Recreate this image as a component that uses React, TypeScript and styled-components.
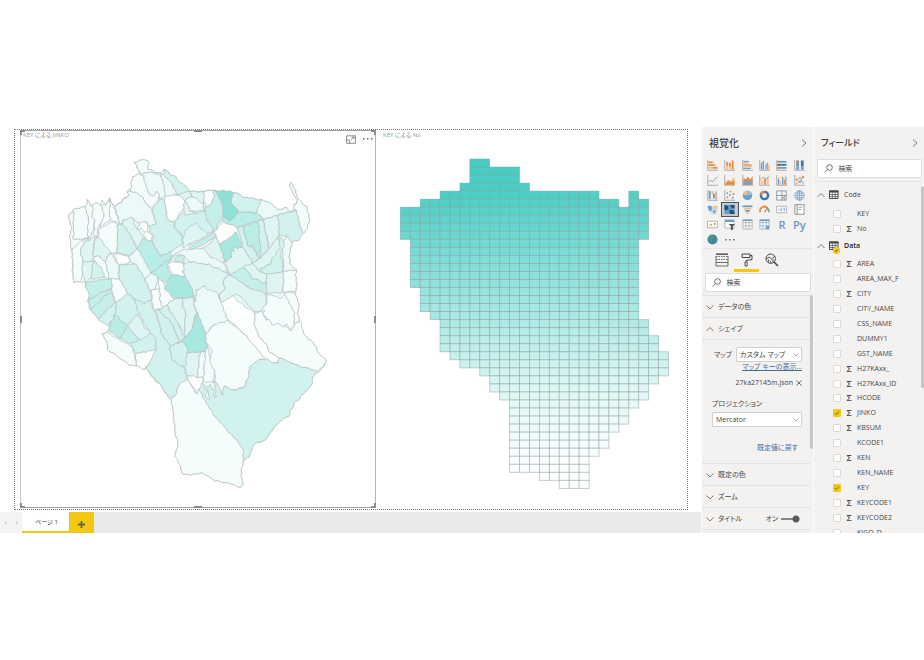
import React from "react";
import styled, { createGlobalStyle, css } from "styled-components";

const GlobalStyle = createGlobalStyle`
  *, *::before, *::after { box-sizing: border-box; }
  body {
    margin: 0;
    background: #fff;
    color: #484644;
    font-family: "Open Sans", "Noto Sans CJK JP", sans-serif;
    font-size: 7px;
    line-height: 10px;
    font-feature-settings: "palt";
  }
  button, input, select { font: inherit; font-feature-settings: inherit; color: inherit; }
  button { border: 0; padding: 0; background: none; cursor: pointer; }
  h2, h3, ul { margin: 0; padding: 0; font-weight: inherit; font-size: inherit; }
  svg { display: block; }
`;

const Page = styled.div`
  height: 100vh;
  padding: 127px 0;
  overflow: hidden;
`;

const Workspace = styled.div`
  display: grid;
  grid-template-columns: 1fr 112px 111px;
  height: 100%;
`;

const Report = styled.main`
  display: flex;
  flex-direction: column;
  min-width: 0;
`;

const Canvas = styled.div`
  flex: 1;
  min-height: 0;
  display: grid;
  grid-template-columns: 356fr 311fr;
  margin: 2px 13px 2px 14px;
  padding: 0 0 1px 5px;
  border: 1px dotted #777;
`;

const Visual = styled.section<{ $selected?: boolean }>`
  position: relative;
  display: flex;
  flex-direction: column;
  min-width: 0;
  min-height: 0;
  ${(p) =>
    p.$selected &&
    css`
      box-shadow: inset 1px 0 #c4c4c4, inset -1px 0 #b4b4b4, inset 0 1px #a4a4a4, inset 0 -1px #a4a4a4;
    `}
`;

const VisualHeader = styled.header<{ $inset: number }>`
  flex: none;
  display: flex;
  justify-content: space-between;
  height: 20px;
  padding: 0 3px 0 ${(p) => p.$inset}px;
  font-size: 6px;
  color: #8f9a98;
`;

const VisualActions = styled.div`
  display: flex;
  align-items: center;
  gap: 7px;
  height: 18px;
`;

const VisualBody = styled.svg`
  flex: 1;
  min-height: 0;
  width: 100%;
`;

const Handle = styled.span<{ $v: "top" | "middle" | "bottom"; $h: "left" | "center" | "right" }>`
  position: absolute;
  width: ${(p) => (p.$h === "center" ? 8 : p.$v === "middle" ? 2 : 5)}px;
  height: ${(p) => (p.$h === "center" ? 2 : p.$v === "middle" ? 7 : 5)}px;
  ${(p) => p.$v === "top" && "top: 0;"}
  ${(p) => p.$v === "bottom" && "bottom: 0;"}
  ${(p) => p.$v === "middle" && "top: calc(50% - 3px);"}
  ${(p) => p.$h === "left" && "left: 0;"}
  ${(p) => p.$h === "right" && "right: 0;"}
  ${(p) => p.$h === "center" && "left: calc(50% - 4px);"}
  ${(p) =>
    p.$h === "center" || p.$v === "middle"
      ? "background: #8c8c8c;"
      : `border: 0 solid #8c8c8c; border-${p.$v}-width: 2px; border-${p.$h}-width: 2px;`}
`;

const TabBar = styled.nav`
  display: flex;
  height: 21px;
  background: #eaeaea;
`;

const PagerButton = styled.button`
  width: 11px;
  color: #999;
  background: #f4f4f4;
`;

const PageTab = styled.button`
  width: 47px;
  padding-left: 2px;
  background: #fff;
  border-bottom: 2px solid #f2c811;
  font-size: 6px;
  color: #3a3a3a;
`;

const AddPage = styled.button`
  display: grid;
  place-items: center;
  width: 25px;
  padding-top: 3px;
  background: #f2c811;
`;

const Pane = styled.aside`
  display: flex;
  flex-direction: column;
  min-width: 0;
  min-height: 0;
  overflow: hidden;
  background: #f3f2f1;
  border-left: 1px solid #fbfbfb;
`;

const PaneHeader = styled.header`
  flex: none;
  display: flex;
  align-items: center;
  justify-content: space-between;
  height: 31px;
  padding: 0 5px 0 7px;
`;

const PaneTitle = styled.h2<{ $large?: boolean }>`
  font-size: ${(p) => (p.$large ? 10 : 9)}px;
  font-weight: 500;
  color: #3b3a39;
`;

const Gallery = styled.div`
  flex: none;
  display: grid;
  grid-template-columns: repeat(6, 1fr);
  height: 91px;
  grid-auto-rows: 1fr;
  padding: 0 5px 1px 2px;
  border-bottom: 1px solid #e6e5e4;
`;

const GalleryButton = styled.button<{ $active?: boolean }>`
  display: grid;
  place-items: center;
  ${(p) => p.$active && "outline: 1px solid #4a5560; outline-offset: -1px; background: #c3cbd3;"}
`;

const FormatTabs = styled.div`
  flex: none;
  display: flex;
  padding-left: 7px;
  height: 23px;
`;

const FormatTab = styled.button<{ $active?: boolean }>`
  display: grid;
  place-items: center;
  width: 25px;
  padding-top: 2px;
  border-bottom: 3px solid ${(p) => (p.$active ? "#f2c811" : "transparent")};
`;

const SearchBox = styled.label`
  flex: none;
  display: flex;
  align-items: center;
  gap: 5px;
  height: 19px;
  margin: 1px 2px 3px 3px;
  padding-left: 6px;
  background: #fff;
  border: 1px solid #dedddc;
  border-radius: 1px;
`;

const SearchInput = styled.input`
  min-width: 0;
  width: 100%;
  border: 0;
  padding: 0;
  outline: 0;
  background: none;
  &::placeholder { color: #484644; opacity: 1; }
`;

const Scroller = styled.div`
  flex: 1;
  min-height: 0;
  display: grid;
  grid-template-columns: 1fr 3px;
  overflow: hidden;
`;

const ScrollThumb = styled.div<{ $length: number; $gap?: number }>`
  height: ${(p) => p.$length}px;
  margin-top: ${(p) => p.$gap ?? 0}px;
  border-radius: 2px;
  background: #c8c6c4;
`;

const Sections = styled.div`
  min-width: 0;
`;

const Section = styled.div`
  display: flex;
  align-items: center;
  justify-content: space-between;
  height: 22px;
  padding: 0 10px 0 4px;
  border-top: 1px solid #e3e2e1;
`;

const SectionButton = styled.button`
  display: flex;
  align-items: center;
  gap: 4px;
`;

const SwitchLabel = styled.label`
  display: flex;
  align-items: center;
  gap: 3px;
`;

const Switch = styled.input`
  appearance: none;
  width: 19px;
  height: 8px;
  margin: 0;
  background:
    radial-gradient(circle at calc(100% - 4px) 50%, #5c5a58 3px, transparent 4px),
    linear-gradient(#8a8886, #8a8886) 0 50% / 13px 2px no-repeat;
`;

const ShapeForm = styled.div`
  display: flex;
  flex-direction: column;
  align-items: flex-end;
  height: 124px;
  padding: 7px 8px 0 10px;
  border-top: 1px solid #e3e2e1;
`;

const InlineField = styled.label`
  display: flex;
  align-items: center;
  gap: 4px;
`;

const StackField = styled.label`
  display: flex;
  flex-direction: column;
  gap: 3px;
  width: 100%;
  margin: 11px 0 16px;
`;

const SelectBox = styled.select<{ $width: string }>`
  appearance: none;
  width: ${(p) => p.$width};
  height: 15px;
  padding: 0 3px;
  border: 1px solid #d2d0ce;
  border-radius: 1px;
  background:
    url("data:image/svg+xml,%3Csvg xmlns='http://www.w3.org/2000/svg' viewBox='0 0 6 4'%3E%3Cpath d='M.5 .5 3 3 5.500 .5' fill='none' stroke='%23888' stroke-width='.7'/%3E%3C/svg%3E")
    right 2px center / 6px 4px no-repeat #fff;
`;

const Link = styled.a<{ $plain?: boolean }>`
  color: #3f6e9e;
  text-decoration: ${(p) => (p.$plain ? "none" : "underline")};
  ${(p) => p.$plain && "padding: 0 4px;"}
`;

const FileRow = styled.div`
  display: flex;
  align-items: center;
  gap: 3px;
  margin-top: 6px;
`;

const Tree = styled.div`
  min-width: 0;
  border-top: 1px solid #e6e5e4;
  padding-top: 5px;
`;

const TableHead = styled.button<{ $bold?: boolean }>`
  display: flex;
  align-items: center;
  gap: 3px;
  height: 16px;
  padding-left: 3px;
  font-weight: ${(p) => (p.$bold ? 600 : 400)};
  color: ${(p) => (p.$bold ? "#252423" : "inherit")};
`;

const TableName = styled.span`
  padding-left: 1px;
`;

const FieldList = styled.ul<{ $height: number }>`
  display: grid;
  grid-auto-rows: 1fr;
  height: ${(p) => p.$height}px;
  margin-top: 3px;
  margin-bottom: 2px;
  list-style: none;
`;

const FieldRow = styled.label`
  display: grid;
  grid-template-columns: 8px 12px 1fr;
  align-items: center;
  gap: 2px;
  height: 100%;
  padding-left: 19px;
  white-space: nowrap;
`;

const Check = styled.input`
  appearance: none;
  width: 8px;
  height: 8px;
  margin: 0;
  border: 1px solid #dcdad8;
  border-radius: 1px;
  background: #fff;
  &:checked {
    border-color: #f2c811;
    background: url("data:image/svg+xml,%3Csvg xmlns='http://www.w3.org/2000/svg' viewBox='0 0 6 6'%3E%3Cpath d='M1 3 2.500 4.500 5 1.500' fill='none' stroke='%23555' stroke-width='.8'/%3E%3C/svg%3E") center / 6px no-repeat #f2c811;
  }
`;

const Sigma = styled.span`
  font-weight: 600;
  font-size: 9px;
  text-align: center;
`;

/* ---------- drawings ---------- */

const Chevron = ({ dir, size = 8 }: { dir: "up" | "down" | "right"; size?: number }) => (
  <svg width={size} height={size} viewBox="0 0 8 8" fill="none" stroke="#605e5c" strokeWidth="0.8">
    <path d={dir === "up" ? "M.5 6 4 2.500 7.500 6" : dir === "down" ? "M.5 2.500 4 6 7.500 2.500" : "M2 .5 6 4 2 7.500"} />
  </svg>
);

const SearchIcon = () => (
  <svg width="11" height="11" viewBox="0 0 11 11" fill="none" stroke="#484644" strokeWidth="0.9">
    <circle cx="6.500" cy="4.300" r="3.300" />
    <path d="M4.200 6.700 .8 10.200" />
  </svg>
);

const TableIcon = ({ marked }: { marked?: boolean }) => (
  <svg width="12" height="12" viewBox="0 0 12 12" overflow="visible">
    <path d="M1.500 2h8.500v7.500H1.500z" fill="#fff" stroke="#484644" />
    <path d="M1 1.500h9.500v2H1z" fill="#484644" />
    <path d="M1.500 5.500H10M1.500 7.500H10M4.300 3v6.500M7.200 3v6.500" stroke="#484644" strokeWidth=".7" />
    {marked && (
      <>
        <circle cx="8.500" cy="10.500" r="3.600" fill="#f2c811" />
        <path d="M7 10.500l1.200 1.100L10 9.400" fill="none" stroke="#444" strokeWidth=".8" />
      </>
    )}
  </svg>
);

const O = "#e98a3c";
const L = "#f4bd83";
const B = "#6b9fce";
const D = "#3c78ae";
const G = "#8f8f8f";

const axes = <path d="M.8 0v11.200H12" fill="none" stroke="#a0a0a0" strokeWidth=".9" />;

type Bar = [number, number, number, number, string];
const bars = (list: Bar[]) =>
  list.map(([x, y, w, h, fill], i) => <rect key={i} x={x} y={y} width={w} height={h} fill={fill} />);

const globe = (
  <g fill="none" stroke={B} strokeWidth=".8">
    <circle cx="6" cy="6" r="5.200" />
    <ellipse cx="6" cy="6" rx="2.400" ry="5.200" />
    <path d="M.8 6h10.400M1.600 3.500h8.800M1.600 8.500h8.800M6 .8v10.400" />
  </g>
);

const galleryIcons: [string, React.ReactNode][] = [
  ["Stacked bar chart", <>{axes}{bars([[1.5, 1.5, 4, 2, O], [5.5, 1.5, 2, 2, L], [1.5, 4.5, 6, 2, O], [7.5, 4.5, 2, 2, L], [1.5, 7.5, 5, 2, L], [6.5, 7.5, 5, 2, O]])}</>],
  ["Stacked column chart", <>{axes}{bars([[2.5, 2, 2, 5, O], [2.5, 7, 2, 3.5, L], [5.5, 3, 2, 5, O], [5.5, 7, 2, 3.5, L], [8.5, 0.5, 2, 10, O]])}</>],
  ["Clustered bar chart", <>{axes}{bars([[1.5, 1, 6, 1.5, B], [1.5, 2.5, 5, 1.5, L], [1.5, 4.7, 9, 1.5, O], [1.5, 6.2, 10, 1.5, L], [1.5, 8.4, 8, 1.5, B]])}</>],
  ["Clustered column chart", <>{axes}{bars([[2, 3, 1.5, 7.5, B], [4, 1, 1.5, 9.5, B], [6.5, 5, 1.5, 5.5, L], [8, 3, 1.5, 7.5, B], [10, 5, 1.5, 5.5, L]])}</>],
  ["100% stacked bar chart", <>{axes}{bars([[1.5, 1, 5, 2, G], [6.5, 1, 5, 2, B], [1.5, 4.3, 3, 2, "#555"], [4.5, 4.3, 7, 2, D], [1.5, 7.6, 6, 2, G], [7.5, 7.6, 4, 2, B]])}</>],
  ["100% stacked column chart", <>{axes}{bars([[2.5, 0.5, 3, 6.5, G], [2.5, 7, 3, 3.5, B], [7.5, 0.5, 3, 6.5, D], [7.5, 7, 3, 3.5, B]])}</>],
  ["Line chart", <>{axes}<path d="M1.500 8 4 5.500 6 7.500 8.500 4.500 11.500 2" fill="none" stroke={B} /></>],
  ["Area chart", <>{axes}<path d="M1.500 8 4.500 5 7 7 11.500 2v8.500h-10z" fill={L} /><path d="M1.500 9 5 6.500 8 8 11.500 6v4.500h-10z" fill={O} /></>],
  ["Stacked area chart", <>{axes}<path d="M1.500 3 4 5 6.500 2 9 5 11.500 1v9.500h-10z" fill={O} /><path d="M1.500 8 4.500 5 7 7.500 11.500 4v6.500h-10z" fill="#86a1b1" /></>],
  ["Line and stacked column chart", <>{axes}{bars([[2.5, 6, 2, 4.5, L], [5.5, 4, 2, 6.5, O], [8.5, 3, 2, 7.5, L]])}<path d="M1.500 5 5 2.500 8 4 11.500 .8" fill="none" stroke={G} strokeWidth=".8" /></>],
  ["Line and clustered column chart", <>{axes}{bars([[2, 4, 1.5, 6.5, B], [4, 6, 1.5, 4.5, L], [6.5, 2, 1.5, 8.5, B], [8.5, 5, 1.5, 5.5, O], [10.3, 2, 1.2, 8.5, B]])}<path d="M1.500 4 5 2 8 3.500 11.500 .8" fill="none" stroke={L} strokeWidth=".8" /></>],
  ["Ribbon chart", <>{axes}{bars([[2, 4, 2, 2.4, O], [2, 8, 2, 2, L], [5.5, 2, 2, 2.4, L], [5.5, 6, 2, 2.4, B], [9, 1, 2, 2.4, O], [9, 7, 2, 2.4, L]])}<path d="M4 5l1.500-2M7.500 7 9 2M4 9l1.500-2M7.500 3 9 8" fill="none" stroke={B} strokeWidth=".7" /></>],
  ["Waterfall chart", <>{axes}{bars([[2, 1, 2, 9, B], [5, 1, 2, 4, L], [6.5, 4, 2, 5, G], [9, 1.5, 2, 9, "#b8b8b8"]])}</>],
  ["Scatter chart", <>{axes}<g fill={B}><circle cx="3.500" cy="3.500" r="1.100" /><circle cx="6.500" cy="5.500" r="1.100" /><circle cx="9.500" cy="8.500" r="1.100" /></g><g fill={O}><circle cx="3.700" cy="8" r="1.100" /><circle cx="7.300" cy="1.700" r="1" /><circle cx="10.300" cy="4.500" r="1.100" /></g></>],
  ["Pie chart", <><circle cx="6" cy="6" r="5.200" fill={B} /><path d="M6 6V.8A5.200 5.200 0 0 0 .9 5z" fill={L} /><path d="M6 6 11 4.500A5.200 5.200 0 0 0 6 .8z" fill="#9ec0e0" /></>],
  ["Donut chart", <><circle cx="6" cy="6" r="4" fill="none" stroke={D} strokeWidth="2.600" /><path d="M2.200 5A4 4 0 0 1 6 2" fill="none" stroke={O} strokeWidth="2.600" /></>],
  ["Treemap", <path d="M.8 1h10.400v10H.8zM6.500 1v10M.8 6h10.400M9 6v5M6.500 8.500H9" fill="#f7f7f7" stroke="#7f8c96" strokeWidth=".9" />],
  ["Map", globe],
  ["Filled map", <><circle cx="7" cy="7" r="4.500" fill="#cfe0ee" /><path d="M.5 2.500 4 1.500 6 4 4.500 8 2 7z" fill={B} /><path d="M7 2h4.500v3L8 6z" fill={L} /><path d="M6 7h4l-2 4z" fill={B} /></>],
  ["Shape map", <><path d="M.5 1h11v10H.5z" fill="#6d97bd" /><path d="M.5 1 4 2l1 3-2.500 2L.5 6zM7 1h4.500v4L8 4zM5.500 7 9 6.500l2.500 2V11H7z" fill="#1f4e79" /></>],
  ["Funnel", <>{bars([[0.5, 1.5, 11, 2, B], [2, 4, 8, 2, L], [3.5, 6.5, 5, 2, B], [4.7, 9, 2.6, 2, L]])}</>],
  ["Gauge", <><path d="M1.500 9A4.500 4.500 0 0 1 9.500 5" fill="none" stroke={O} strokeWidth="2" /><path d="M9 4.300A4.500 4.500 0 0 1 10.500 9" fill="none" stroke="#77a877" strokeWidth="2" /><path d="M6 9 8.500 5.500" stroke="#555" /></>],
  ["Card", <><path d="M.5 2.500h11v7H.5z" fill="#fff" stroke="#aaa" strokeWidth=".9" /><path d="M3 4.500v3M5 4.500h1.500V6H5v1.500h1.500M8 4.500h1.500v3H8M8 6h1.500" fill="none" stroke={B} strokeWidth=".7" /></>],
  ["Multi-row card", <><path d="M1 .8h10v10.400H1z" fill="#fff" stroke="#8a8a8a" /><path d="M3.500 .8v10.400" stroke="#8a8a8a" /><path d="M5 3.500h4M5 6h3" stroke={B} /></>],
  ["KPI", <><path d="M.5 2.500h11v7H.5z" fill="#fff" stroke="#aaa" strokeWidth=".9" /><path d="M2.500 7 4.200 4.500 6 7z" fill={O} /><path d="M7 4.500h3L8.500 7z" fill="#5f9a6c" /></>],
  ["Slicer", <><path d="M1 1h10v9H1z" fill="#fff" stroke="#aaa" strokeWidth=".9" /><path d="M1 1h10v2.200H1z" fill={B} /><path d="M5 5.500h7L9.700 8v4H7.500V8z" fill="#555" /></>],
  ["Table", <><path d="M1 1h10v10H1zM1 4h10M1 7.500h10M4.300 1v10M7.700 1v10" fill="#fff" stroke="#aaa" strokeWidth=".9" /><path d="M.6 .6h10.800v1.500H.6z" fill={B} /></>],
  ["Matrix", <><path d="M1 1h10v10H1zM1 4h10M1 7.500h10M4.300 1v10M7.700 1v10" fill="#fff" stroke="#8fb0cc" strokeWidth=".9" /><path d="M.6 .6h10.800v1.700H.6z" fill={B} /><path d="M7.700 7.500H11V11H7.700z" fill={B} /></>],
];

const ScriptLetter = styled.span`
  font-size: 11px;
  font-weight: 600;
  color: #6c97c4;
`;

/* Each district: tint, then its outline on a grid of three units per pixel. */
const tints = ["#fcfefe", "#f5fdfc", "#ebf9f8", "#dff5f3", "#d2f2ef", "#c5efeb", "#b9ede8", "#a7e8e1", "#8fe0d8"];

const silhouette =
  "403,127 432,117 445,128 443,148 483,160 491,148 527,172 566,215 646,211 701,216 735,232 785,240 815,250 832,269 860,263 870,275 887,262 880,255 892,243 882,225 869,192 873,188 888,215 892,232 920,262 928,290 922,325 911,340 900,350 895,362 875,367 873,385 866,410 873,435 889,450 888,480 890,505 887,520 897,560 893,580 898,605 913,643 945,675 955,698 980,724 962,754 940,766 935,795 880,855 865,888 835,908 795,960 762,972 747,1010 730,1022 722,1070 730,1092 722,1103 690,1090 645,1082 605,1058 575,1065 545,1060 540,1035 525,1010 535,965 525,940 522,890 513,840 510,836 490,810 485,798 455,772 438,747 430,748 412,738 390,735 322,688 322,670 306,640 320,637 330,620 295,598 270,568 262,540 270,525 256,498 256,487 220,485 217,430 217,386 212,385 210,350 214,325 208,295 207,285 220,270 257,260 262,240 272,258 290,248 303,256 306,240 318,256 328,236 340,255 350,255 385,225 383,215 392,205 398,170 420,160";

const districts: [number, string][] = [
  [1, "403,127 432,117 445,128 443,148 483,160 482,165 455,157 423,162"],
  [1, "398,170 420,160 430,168 448,225 458,230 470,215 478,228 475,240 455,265 437,250 427,228 391,212 392,205"],
  [2, "423,162 455,157 482,165 487,180 498,228 478,238 478,228 470,215 458,230 448,225 430,168"],
  [4, "491,148 527,172 575,217 532,223 510,185 491,165"],
  [2, "483,160 491,165 510,185 532,223 498,232 487,180"],
  [0, "498,230 532,223 552,240 553,265 540,280 522,305 505,300 492,240"],
  [4, "478,238 492,240 503,300 522,305 525,325 550,350 545,375 510,395 485,408 457,365 460,345 447,335 450,318 467,310 458,265 475,250"],
  [2, "383,215 391,212 427,228 437,250 455,265 467,310 450,318 435,305 415,310 397,292 370,300 360,312 345,262 385,228"],
  [0, "410,318 420,316 415,308 432,305 444,320 440,335 455,345 457,365 440,360 430,345 436,335 425,325 415,330"],
  [3, "370,300 397,292 405,320 418,335 430,355 415,385 390,345 365,310"],
  [4, "352,315 365,310 390,345 412,388 385,405 350,400 352,360"],
  [1, "340,305 352,312 352,360 350,395 330,400 293,350 300,325"],
  [0, "328,236 340,262 360,312 345,305 330,300"],
  [1, "303,256 318,256 328,236 330,300 300,320 305,300 313,290"],
  [1, "280,252 290,248 303,256 313,290 295,320 290,350 280,345 285,300 275,290"],
  [1, "262,240 272,258 280,252 275,290 285,300 275,345 262,355 265,300 257,260"],
  [1, "220,270 257,260 265,300 262,355 220,358"],
  [1, "207,285 220,275 220,358 262,356 217,386 212,385 210,350 214,325"],
  [1, "217,386 245,362 270,355 248,372 242,395 248,425 247,465 240,485 220,485"],
  [3, "248,372 290,348 280,370 280,410 275,425 248,425 242,395"],
  [3, "293,350 330,395 315,425 298,410 280,410 282,367"],
  [1, "280,410 298,410 315,425 330,475 313,473 300,445 285,425"],
  [4, "280,425 285,425 305,445 313,473 272,476"],
  [3, "248,425 280,425 272,476 256,487 247,465"],
  [2, "330,398 350,430 357,440 356,478 330,475 315,425"],
  [0, "340,400 385,408 392,425 370,435 355,432"],
  [2, "388,407 412,386 450,440 455,458 435,475 405,430 392,425"],
  [4, "358,435 370,435 405,430 435,475 450,515 455,540 430,550 403,535 383,520 358,478"],
  [6, "430,355 457,365 480,408 510,395 518,410 455,458 412,385"],
  [6, "455,458 518,410 505,430 505,455 515,465 495,490 470,470"],
  [0, "503,430 520,425 550,430 555,445 548,455 555,470 520,465"],
  [5, "522,415 545,402 555,410 550,430 530,425"],
  [7, "515,465 555,470 575,500 580,530 523,537 493,505"],
  [2, "455,458 470,470 475,475 465,505 453,515 435,475"],
  [1, "475,472 492,490 493,505 523,537 490,565 480,540 478,508"],
  [1, "455,510 478,508 480,540 490,565 463,568 455,540"],
  [5, "256,487 335,475 335,505 300,520 265,543 270,525 258,505"],
  [5, "265,543 300,520 335,508 315,525 295,550 272,568"],
  [5, "335,515 345,545 295,598 272,568 295,550 315,525"],
  [1, "335,475 357,478 383,520 350,548 335,510"],
  [4, "345,545 350,548 345,585 325,620 295,598"],
  [4, "350,548 383,520 405,540 418,583 382,618 345,585"],
  [6, "345,585 382,618 360,655 325,630"],
  [5, "382,618 420,662 393,672 360,655"],
  [3, "410,585 425,600 432,620 455,636 445,650 420,662 382,618"],
  [4, "393,672 440,650 453,638 468,655 470,688 405,702"],
  [1, "306,640 320,637 395,680 407,720 412,738 390,735 322,688 322,670"],
  [0, "405,702 468,688 460,715 430,748 412,738"],
  [4, "403,535 430,550 450,540 468,580 485,640 510,675 515,720 550,740 562,770 558,785 535,795 530,820 510,836 485,798 438,747 468,690 468,655 450,638 425,595 410,570"],
  [4, "468,568 475,570 515,610 538,665 510,677 485,640"],
  [4, "475,570 500,555 530,605 555,650 538,665 515,610"],
  [3, "500,555 523,537 550,535 548,560 557,575 553,635 530,605"],
  [3, "550,535 580,532 587,580 575,630 555,650 553,635 557,575 548,560"],
  [7, "590,580 605,610 617,640 622,692 565,700 562,682 543,665 575,630"],
  [4, "510,677 543,665 562,682 560,740 545,738 515,720"],
  [3, "562,700 600,695 593,772 562,768 555,740"],
  [1, "600,695 617,695 610,772 593,772"],
  [0, "560,767 610,773 608,800 590,822 580,800 565,785"],
  [1, "617,695 622,680 632,720 643,760 640,785 612,785 610,772"],
  [1, "618,640 650,610 682,600 735,645 800,718 775,718 750,740 745,770 732,800 700,810 670,800 667,825 655,800 648,795 643,755 630,730 635,690 618,665"],
  [2, "590,510 615,495 650,515 662,545 685,600 640,615 618,640 600,600 590,575 583,550"],
  [0, "662,548 695,525 735,560 765,578 763,610 780,655 800,670 808,695 838,713 832,732 800,720 735,645 682,595"],
  [1, "765,578 785,575 795,595 850,615 875,632 885,608 900,606 913,643 945,675 955,698 980,724 955,754 895,738 838,713 808,695 800,670 780,655 763,610"],
  [1, "802,525 825,528 845,535 855,520 882,575 884,608 873,632 862,612 850,620 830,610 815,615 808,600 795,598 800,590 785,580 795,572 785,565 800,550"],
  [1, "850,515 887,520 897,560 893,580 898,605 884,608 882,575"],
  [4, "597,805 606,790 616,795 612,808 622,815 615,825 626,842 628,835 620,800 630,795 634,805 641,808 643,835 648,832 645,800 640,782 655,795 662,810 667,826 670,822 668,806 675,800 700,810 732,805 745,770 750,740 775,718 800,718 832,732 838,713 895,738 955,754 940,766 935,795 880,855 865,888 835,908 795,960 762,972 747,1010 730,1022 730,990 715,968 640,882 620,850 610,830"],
  [1, "513,840 530,820 535,795 562,780 590,822 597,805 610,830 620,850 640,882 715,968 730,990 730,1022 722,1070 730,1092 722,1103 690,1090 645,1082 605,1058 575,1065 545,1060 540,1035 525,1010 535,965 525,940 522,890"],
  [8, "646,211 701,216 693,250 716,277 690,303 670,288 665,250"],
  [4, "701,216 735,232 785,240 780,255 768,278 716,275 693,250"],
  [2, "785,240 815,250 832,269 860,263 870,275 890,270 790,297 768,278"],
  [6, "670,290 690,303 716,277 768,278 790,297 712,322 670,305"],
  [5, "638,211 646,211 665,250 670,290 642,333 615,290 615,265 635,250 642,230"],
  [1, "610,215 638,211 642,230 635,250 620,262 610,235"],
  [3, "566,215 610,215 612,265 595,260 575,225"],
  [2, "555,240 575,228 610,250 612,270 590,275 570,272 560,250"],
  [4, "615,270 618,295 642,333 600,350 570,375 550,360 545,340 525,325 525,305 545,280 590,280"],
  [3, "532,223 566,215 575,228 555,240 560,250 570,272 590,280 553,285 552,240"],
  [3, "560,325 570,318 590,312 620,340 642,335 570,372 548,385 550,350"],
  [5, "567,382 600,360 645,338 648,350 610,375 570,390"],
  [0, "668,305 712,322 710,340 660,373 642,335"],
  [7, "710,338 730,380 712,385 705,380 700,395 690,390 695,410 673,425 660,375"],
  [3, "648,350 660,375 673,425 655,430 630,410 610,385 630,370"],
  [2, "515,410 550,388 570,388 610,385 630,410 670,428 688,462 630,435 570,425 545,402"],
  [3, "730,380 758,430 692,465 673,425 695,410 690,390 700,395 705,380 712,385"],
  [4, "712,322 730,320 742,375 760,385 775,415 758,430 730,380"],
  [6, "730,320 775,305 785,410 775,415 760,375 755,380 742,375"],
  [4, "775,305 790,298 805,385 783,412 778,350"],
  [3, "790,298 835,285 838,345 808,388"],
  [4, "835,285 890,270 900,320 911,340 895,362 875,367 860,350 838,345"],
  [1, "869,192 873,188 888,215 892,232 920,262 928,290 922,325 911,340 900,320 890,270 882,262 892,243 882,225"],
  [2, "860,350 875,367 873,385 866,410 873,435 889,450 850,455 850,410 845,370"],
  [4, "838,348 855,370 842,400 850,455 800,463 780,452 810,430 832,385"],
  [3, "783,412 808,388 832,350 840,380 810,430 800,435 775,452 758,430"],
  [3, "730,440 758,430 780,455 800,463 799,492 760,475"],
  [5, "692,465 730,442 760,475 799,492 799,520 770,513 750,505 720,485"],
  [3, "800,463 850,455 850,500 845,518 799,520"],
  [1, "850,455 889,450 888,480 890,505 887,515 850,515"],
  [3, "670,480 692,465 720,485 750,505 799,520 798,550 780,575 760,572 740,550 720,530 710,523 662,548 655,525 675,510"],
  [3, "550,430 570,425 630,435 688,462 670,480 675,510 655,525 662,545 650,515 622,510 615,495 600,505 590,510 585,545 575,500 555,470"],
];

/* Splits long edges and shifts every point by a smooth function of its place,
   so that borders look hand-surveyed and neighbours still share them. */
const roughen = (points: string) => {
  const ring = points.split(" ").map((p) => p.split(",").map(Number));
  const out: string[] = [];
  ring.forEach(([x, y], i) => {
    const [nx, ny] = ring[(i + 1) % ring.length];
    const steps = Math.max(1, Math.round(Math.hypot(nx - x, ny - y) / 6));
    for (let s = 0; s < steps; s++) {
      const px = x + ((nx - x) * s) / steps;
      const py = y + ((ny - y) * s) / steps;
      const dx = 1.3 * Math.sin(py * 0.31 + px * 0.07) + 1.1 * Math.sin(py * 0.13 - px * 0.19);
      const dy = 1.3 * Math.sin(px * 0.29 - py * 0.09) + 1.1 * Math.sin(px * 0.12 + py * 0.17);
      out.push(`${(px + dx).toFixed(1)},${(py + dy).toFixed(1)}`);
    }
  });
  return out.join(" ");
};

/* First and last column of every run of cells, row by row. */
const gridRows: number[][] = [
  [7, 8], [7, 11], [7, 11], [6, 12], [4, 19, 23, 23], [2, 21, 23, 24],
  ...Array(4).fill([0, 24]),
  ...Array(6).fill([1, 23]),
  ...Array(3).fill([2, 23]),
  [3, 23], [4, 24], [4, 24], [4, 25], [4, 25], [5, 26], [6, 26], [8, 26], [9, 25], [9, 24], [10, 24],
  [11, 23], [11, 22], [11, 22], [11, 21], [11, 20], [11, 20], [11, 19], [11, 18], [11, 18], [14, 18], [16, 18],
];

const cells = gridRows.flatMap((runs, row) => {
  const list: { row: number; col: number }[] = [];
  for (let i = 0; i < runs.length; i += 2)
    for (let col = runs[i]; col <= runs[i + 1]; col++) list.push({ row, col });
  return list;
});

const shade = (t: number) => {
  const mix = (a: number) => Math.round(a + (255 - a) * t);
  return `rgb(${mix(70)},${mix(205)},${mix(196)})`;
};

const ShapeMap = () => (
  <VisualBody viewBox="60 90 1068 1074" role="img" aria-label="KEY による JINKO">
    <g stroke="#b9c2c1" strokeWidth="2.400" strokeLinejoin="round">
      <polygon points={roughen(silhouette)} fill={tints[2]} />
      {districts.map(([tint, points], i) => (
        <polygon key={i} points={roughen(points)} fill={tints[tint]} />
      ))}
    </g>
  </VisualBody>
);

const GridMap = () => (
  <VisualBody viewBox="1128 90 933 1074" role="img" aria-label="KEY による No">
    <g stroke="#86a09e" strokeOpacity=".6" strokeWidth="2.400">
      {cells.map(({ row, col }, i) => (
        <rect key={i} x={1201 + col * 29.8} y={117 + row * 24.1} width={29.8} height={24.1} fill={shade(i / cells.length)} />
      ))}
    </g>
  </VisualBody>
);

/* ---------- data ---------- */

type Field = { name: string; sum?: boolean; on?: boolean };
const codeFields: Field[] = [{ name: "KEY" }, { name: "No", sum: true }];
const dataFields: Field[] = [
  { name: "AREA", sum: true },
  { name: "AREA_MAX_F" },
  { name: "CITY", sum: true },
  { name: "CITY_NAME" },
  { name: "CSS_NAME" },
  { name: "DUMMY1" },
  { name: "GST_NAME" },
  { name: "H27KAxx_", sum: true },
  { name: "H27KAxx_ID", sum: true },
  { name: "HCODE", sum: true },
  { name: "JINKO", sum: true, on: true },
  { name: "KBSUM", sum: true },
  { name: "KCODE1" },
  { name: "KEN", sum: true },
  { name: "KEN_NAME" },
  { name: "KEY", on: true },
  { name: "KEYCODE1", sum: true },
  { name: "KEYCODE2", sum: true },
  { name: "KIGO_D" },
];

const Fields = ({ items, height }: { items: Field[]; height: number }) => (
  <FieldList $height={height}>
    {items.map((f) => (
      <li key={f.name}>
        <FieldRow>
          <Check type="checkbox" defaultChecked={f.on} />
          <Sigma aria-hidden>{f.sum ? "Σ" : ""}</Sigma>
          {f.name}
        </FieldRow>
      </li>
    ))}
  </FieldList>
);

const Collapsible = ({ name, open, children }: { name: string; open?: boolean; children?: React.ReactNode }) => (
  <Section>
    <SectionButton aria-expanded={!!open}>
      <Chevron dir={open ? "up" : "down"} />
      {name}
    </SectionButton>
    {children}
  </Section>
);

const MoreDots = () => (
  <svg width="10" height="8" viewBox="0 0 10 8" fill="#666">
    <path d="M0 3h1.500v1.500H0zM4 3h1.500v1.500H4zM8 3h1.500v1.500H8z" />
  </svg>
);

export default function App() {
  return (
    <Page>
      <GlobalStyle />
      <Workspace>
        <Report>
          <Canvas>
            <Visual $selected>
              <VisualHeader $inset={3}>
                <h3>KEY による JINKO</h3>
                <VisualActions>
                  <button aria-label="Focus mode">
                    <svg width="10" height="9" viewBox="0 0 10 9" fill="none" stroke="#808080" strokeWidth=".9">
                      <path d="M.6 .8h8.800v7.500H.6zM.6 5h3v3.300M5 4.500 8 2M5.800 2H8v2" />
                    </svg>
                  </button>
                  <button aria-label="More options"><MoreDots /></button>
                </VisualActions>
              </VisualHeader>
              <ShapeMap />
              {(["top", "middle", "bottom"] as const).map((v) =>
                (["left", "center", "right"] as const)
                  .filter((h) => !(v === "middle" && h === "center"))
                  .map((h) => <Handle key={v + h} $v={v} $h={h} />)
              )}
            </Visual>
            <Visual>
              <VisualHeader $inset={7}>
                <h3>KEY による No</h3>
              </VisualHeader>
              <GridMap />
            </Visual>
          </Canvas>
          <TabBar>
            <PagerButton aria-label="Previous page">‹</PagerButton>
            <PagerButton aria-label="Next page">›</PagerButton>
            <PageTab>ページ 1</PageTab>
            <AddPage aria-label="Add page">
              <svg width="7" height="7" viewBox="0 0 7 7" stroke="#6b6340" strokeWidth="1.800">
                <path d="M3.500 0v7M0 3.500h7" />
              </svg>
            </AddPage>
          </TabBar>
        </Report>

        <Pane>
          <PaneHeader>
            <PaneTitle $large>視覚化</PaneTitle>
            <button aria-label="Collapse visualizations"><Chevron dir="right" /></button>
          </PaneHeader>
          <Gallery>
            {galleryIcons.map(([label, art]) => (
              <GalleryButton key={label} aria-label={label} $active={label === "Shape map"}>
                <svg width="11" height="11" viewBox="0 0 12 12">{art}</svg>
              </GalleryButton>
            ))}
            <GalleryButton><ScriptLetter>R</ScriptLetter></GalleryButton>
            <GalleryButton><ScriptLetter>Py</ScriptLetter></GalleryButton>
            <GalleryButton aria-label="ArcGIS map">
              <svg width="11" height="11" viewBox="0 0 12 12">
                <circle cx="6" cy="6" r="5.500" fill="#3e7fb5" />
                <path d="M2 3 5 1l3 1-1 3-2 1 1 3-2 1-2-3zM8.500 5 11 4.500 10.500 8 8.500 9z" fill="#4c9a5f" />
              </svg>
            </GalleryButton>
            <GalleryButton aria-label="More visuals"><MoreDots /></GalleryButton>
          </Gallery>
          <FormatTabs>
            <FormatTab aria-label="Fields">
              <svg width="14" height="14" viewBox="0 0 14 14" fill="none" stroke="#605e5c">
                <path d="M1 1.500h12M1 3v10h12V3M1 9.500h12" strokeWidth=".9" />
                <path d="M1 3.500h12M1 6.500h12" strokeDasharray="1.500 1" strokeWidth=".9" />
                <path d="M1 1h12" strokeWidth="1.300" />
              </svg>
            </FormatTab>
            <FormatTab aria-label="Format" $active>
              <svg width="13" height="14" viewBox="0 0 13 14" fill="none" stroke="#484644">
                <path d="M2 1h8v3.500H2zM10 2.500h2v4L6 7.500v1.500" />
                <path d="M5 9h2.200v4H5z" strokeWidth=".9" />
              </svg>
            </FormatTab>
            <FormatTab aria-label="Analytics">
              <svg width="14" height="14" viewBox="0 0 14 14" fill="none" stroke="#484644">
                <circle cx="5.700" cy="5.700" r="4.700" />
                <path d="M9 9l4 4" strokeWidth="1.600" />
                <path d="M1 6.500 4 4l2.500 2L10 3M3.500 9V6.500M5.700 10V7.500M8 9V6" strokeWidth=".9" />
              </svg>
            </FormatTab>
          </FormatTabs>
          <SearchBox>
            <SearchIcon />
            <SearchInput type="search" placeholder="検索" aria-label="検索" />
          </SearchBox>
          <Scroller>
            <Sections>
              <Collapsible name="データの色" />
              <Collapsible name="シェイプ" open />
              <ShapeForm>
                <InlineField>
                  マップ
                  <SelectBox $width="66px"><option>カスタム マップ</option></SelectBox>
                </InlineField>
                <Link href="#keys">マップ キーの表示...</Link>
                <FileRow>
                  27ka27145m.json
                  <button aria-label="Remove file">
                    <svg width="6" height="6" viewBox="0 0 6 6" stroke="#484644" strokeWidth=".8"><path d="M.5 .5l5 5M5.500 .5l-5 5" /></svg>
                  </button>
                </FileRow>
                <StackField>
                  プロジェクション
                  <SelectBox $width="100%"><option>Mercator</option></SelectBox>
                </StackField>
                <Link href="#reset" $plain>既定値に戻す</Link>
              </ShapeForm>
              <Collapsible name="既定の色" />
              <Collapsible name="ズーム" />
              <Collapsible name="タイトル">
                <SwitchLabel>
                  オン
                  <Switch type="checkbox" role="switch" defaultChecked />
                </SwitchLabel>
              </Collapsible>
              <Section />
            </Sections>
            <ScrollThumb $length={154} />
          </Scroller>
        </Pane>

        <Pane>
          <PaneHeader>
            <PaneTitle>フィールド</PaneTitle>
            <button aria-label="Collapse fields"><Chevron dir="right" /></button>
          </PaneHeader>
          <SearchBox>
            <SearchIcon />
            <SearchInput type="search" placeholder="検索" aria-label="フィールドの検索" />
          </SearchBox>
          <Scroller>
            <Tree>
              <TableHead aria-expanded>
                <Chevron dir="up" />
                <TableIcon />
                <TableName>Code</TableName>
              </TableHead>
              <Fields items={codeFields} height={30} />
              <TableHead aria-expanded $bold>
                <Chevron dir="up" />
                <TableIcon marked />
                <TableName>Data</TableName>
              </TableHead>
              <Fields items={dataFields} height={283} />
            </Tree>
            <ScrollThumb $length={202} $gap={5} />
          </Scroller>
        </Pane>
      </Workspace>
    </Page>
  );
}
